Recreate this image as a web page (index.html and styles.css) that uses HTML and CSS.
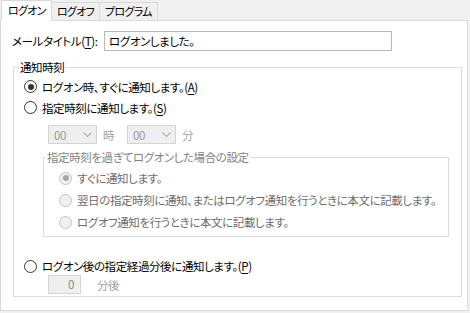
FILE: index.html
```html
<!DOCTYPE html>
<html lang="ja">
<head>
<meta charset="UTF-8">
<title>通知設定</title>
<link rel="stylesheet" href="styles.css">
</head>
<body>
<div class="tabs">
  <div class="tab active">ログオン</div>
  <div class="tab">ログオフ</div>
  <div class="tab">プログラム</div>
</div>
<div class="panel">
  <div class="title-row">
    <span class="label">メールタイトル(<u>T</u>):</span>
    <div class="textbox">ログオンしました。</div>
  </div>

  <fieldset class="group">
    <legend>通知時刻</legend>
    <div class="radio-row first"><span class="radio checked"></span>ログオン時、すぐに通知します。(<u>A</u>)</div>
    <div class="radio-row"><span class="radio"></span>指定時刻に通知します。(<u>S</u>)</div>

    <div class="time-row">
      <div class="combo"><span>00</span><svg width="9" height="6" viewBox="0 0 9 6"><path d="M0.5 0.5 L4.5 4.5 L8.5 0.5" fill="none" stroke="#b4b4b4" stroke-width="1.2"/></svg></div>
      <span class="unit">時</span>
      <div class="combo"><span>00</span><svg width="9" height="6" viewBox="0 0 9 6"><path d="M0.5 0.5 L4.5 4.5 L8.5 0.5" fill="none" stroke="#b4b4b4" stroke-width="1.2"/></svg></div>
      <span class="unit">分</span>
    </div>

    <fieldset class="subgroup">
      <legend>指定時刻を過ぎてログオンした場合の設定</legend>
      <div class="radio-row sub"><span class="radio checked off"></span>すぐに通知します。</div>
      <div class="radio-row sub"><span class="radio off"></span>翌日の指定時刻に通知、またはログオフ通知を行うときに本文に記載します。</div>
      <div class="radio-row sub"><span class="radio off"></span>ログオフ通知を行うときに本文に記載します。</div>
    </fieldset>

    <div class="radio-row last"><span class="radio"></span>ログオン後の指定経過分後に通知します。(<u>P</u>)</div>
    <div class="minutes-row">
      <div class="numbox">0</div>
      <span class="unit">分後</span>
    </div>
  </fieldset>
</div>
</body>
</html>
```
FILE: styles.css
```css
body { margin: 0; background: #f0f0f0; font-family: "Noto Sans CJK JP", sans-serif; font-size: 11.5px; letter-spacing: -0.4px; font-feature-settings: "palt"; color: #000; }
u { text-decoration: underline; text-underline-offset: 2px; }

.tabs { display: flex; align-items: flex-end; height: 20px; padding-left: 1px; }
.tab { height: 18px; line-height: 17px; padding: 0 5px; border: 1px solid #d9d9d9; border-bottom: none; margin-left: -1px; background: #f0f0f0; box-sizing: border-box; white-space: nowrap; font-size: 11px; letter-spacing: -0.7px; }
.tab:first-child { margin-left: 0; }
.tab.active { position: relative; z-index: 1; height: 21px; line-height: 19px; margin-bottom: -1px; padding: 0 5px 0 6px; background: #fff; }

.panel { width: 468px; height: 291px; box-sizing: border-box; border: 1px solid #d9d9d9; background: #fff; padding: 10px 0 0 11px; }

.title-row { display: flex; align-items: center; height: 20px; }
.label { width: 92px; flex: none; white-space: nowrap; }
.textbox { width: 288px; height: 20px; box-sizing: border-box; border: 1px solid #b9b9b9; padding: 0 4px; line-height: 18px; }

.group { width: 449px; box-sizing: border-box; margin: 8px 0 0 1px; padding: 1px 0 0 0; border: 1px solid #dcdcdc; height: 238px; }
.group > legend { margin-left: 5px; padding: 0 1px; line-height: 16px; }

.radio-row { display: flex; align-items: center; height: 21px; padding-left: 10px; white-space: nowrap; }
.radio-row.last { height: 18px; margin-top: 20px; }
.radio { width: 13px; height: 13px; box-sizing: border-box; border: 1px solid #333; border-radius: 50%; background: #fff; margin-right: 5px; position: relative; flex: none; }
.radio.checked::after { content: ""; position: absolute; left: 2.5px; top: 2.5px; width: 6px; height: 6px; border-radius: 50%; background: #333; }
.radio.off { border-color: #c4c4c4; background: #f0f0f0; }
.radio.off.checked::after { background: #a6a6a6; }

.time-row { display: flex; align-items: center; height: 19px; margin: 7px 0 0 34px; }
.combo { width: 49px; height: 19px; box-sizing: border-box; border: 1px solid #d4d4d4; background: #efefef; display: flex; align-items: center; justify-content: space-between; padding: 0 4px 0 5px; color: #9a9a9a; }
.unit { color: #a0a0a0; margin: 0 13px 0 6px; }

.subgroup { width: 406px; box-sizing: border-box; margin: 5px 0 0 29px; padding: 2px 0 3px 0; border: 1px solid #dcdcdc; }
.subgroup > legend { margin-left: 2px; padding: 0 1px; line-height: 16px; color: #838383; }
.radio-row.sub { height: 22px; padding-left: 15px; color: #6d6d6d; }

.minutes-row { display: flex; align-items: center; margin: 0 0 0 34px; }
.numbox { width: 33px; height: 19px; box-sizing: border-box; border: 1px solid #d4d4d4; background: #efefef; text-align: right; padding-right: 6px; line-height: 17px; color: #8a8a8a; }
.minutes-row .unit { margin-left: 16px; }
```
